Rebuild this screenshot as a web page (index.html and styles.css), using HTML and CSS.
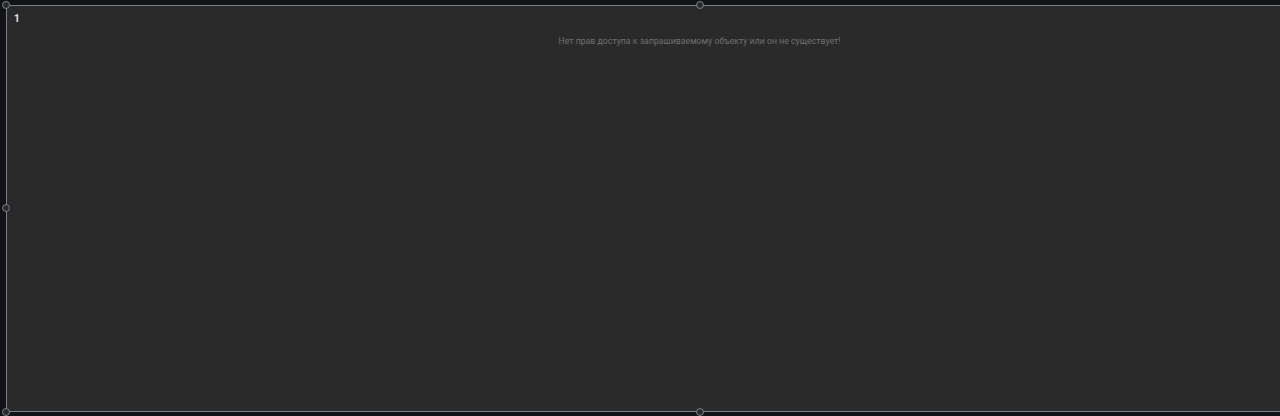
FILE: index.html
```html
<!DOCTYPE html>
<html>
<head>
<meta charset="utf-8">
<link rel="stylesheet" href="styles.css">
</head>
<body>
<div class="canvas">
  <div class="panel">
    <div class="panel-header">
      <span class="panel-title">1</span>
      <div class="panel-message">Нет прав доступа к запрашиваемому объекту или он не существует!</div>
    </div>
    <div class="panel-body"></div>
    <span class="handle h-tl"></span>
    <span class="handle h-tm"></span>
    <span class="handle h-ml"></span>
    <span class="handle h-bl"></span>
    <span class="handle h-bm"></span>
  </div>
</div>
</body>
</html>
```

FILE: styles.css
```css
html, body {
  margin: 0;
  padding: 0;
  background: #121317;
  overflow: hidden;
  width: 1280px;
  height: 416px;
}
.canvas {
  width: 1280px;
  height: 416px;
  overflow: hidden;
  box-sizing: border-box;
  padding: 5px 0 0 6px;
  font-family: Roboto, "Noto Sans", sans-serif;
}
.panel {
  position: relative;
  box-sizing: border-box;
  width: 1388px;
  height: 407px;
  background: #2a2a2a;
  border: 1px solid #7c8088;
  display: flex;
  flex-direction: column;
}
.panel-header {
  height: 46px;
  border-bottom: 1px solid #2e2e2e;
  box-sizing: border-box;
  padding: 6px 8px 0 7px;
  display: flex;
  flex-direction: column;
}
.panel-title {
  color: #e6e6e6;
  font-size: 10px;
  font-weight: 700;
  line-height: 14px;
}
.panel-message {
  color: #707070;
  font-size: 8.75px;
  line-height: 12px;
  text-align: center;
  margin-top: 9px;
}
.panel-body {
  flex: 1;
}
.handle {
  position: absolute;
  width: 6px;
  height: 6px;
  border-radius: 50%;
  border: 1px solid #7c8088;
  background: #2a2a2a;
}
.h-tl { left: -5px; top: -5px; }
.h-tm { left: 689px; top: -5px; }
.h-ml { left: -5px; top: 198px; }
.h-bl { left: -5px; bottom: -5px; }
.h-bm { left: 689px; bottom: -5px; }
```
